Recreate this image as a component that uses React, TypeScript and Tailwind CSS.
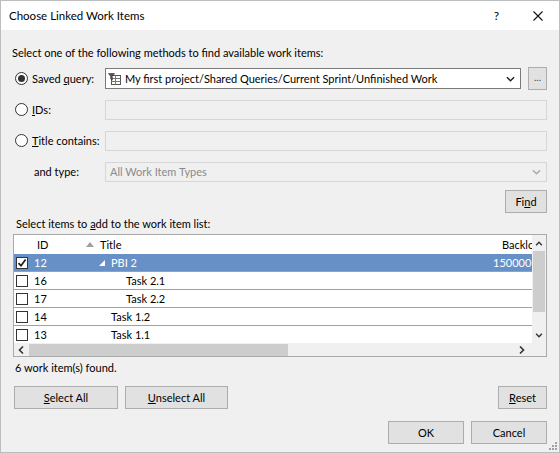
import React from 'react';

function Radio({ checked }: { checked?: boolean }) {
    return (
        <span className="flex h-[13px] w-[13px] shrink-0 items-center justify-center rounded-full border border-[#333333] bg-white">
            {checked && <span className="h-[7px] w-[7px] rounded-full bg-[#333333]" />}
        </span>
    );
}

function Check({ checked }: { checked?: boolean }) {
    return (
        <span className="flex h-[12px] w-[12px] shrink-0 items-center justify-center border border-[#333333] bg-white">
            {checked && (
                <svg viewBox="0 0 10 10" className="h-[10px] w-[10px]">
                    <path d="M1.5 5.2 L4 7.8 L8.6 1.6" stroke="#1a1a1a" strokeWidth="1.7" fill="none" />
                </svg>
            )}
        </span>
    );
}

function Btn({ children, className = '' }: { children: React.ReactNode; className?: string }) {
    return (
        <div className={`flex h-[23px] items-center justify-center border border-[#adadad] bg-[#e1e1e1] ${className}`}>
            {children}
        </div>
    );
}

function Chevron({ color = '#222222' }: { color?: string }) {
    return (
        <svg viewBox="0 0 10 6" className="h-[6px] w-[9px]">
            <path d="M1 1 L5 5 L9 1" stroke={color} strokeWidth="1.6" fill="none" />
        </svg>
    );
}

function QueryIcon() {
    return (
        <svg viewBox="0 0 13 12" className="h-[12px] w-[13px]">
            <rect x="3.5" y="2.5" width="9" height="9" fill="#fff" stroke="#555" />
            <path d="M3.5 5.5 H12.5 M3.5 8.5 H12.5 M7.5 2.5 V11.5" stroke="#777" />
            <path d="M0.5 0.5 H6.5 L4.3 3.5 V7 L2.7 6 V3.5 Z" fill="#555" stroke="#333" strokeWidth="0.6" />
        </svg>
    );
}

const rows = [
    { id: '12', title: 'PBI 2', indent: 'pl-[2px]', tree: true, backlog: '150000', checked: true },
    { id: '16', title: 'Task 2.1', indent: 'pl-[29px]' },
    { id: '17', title: 'Task 2.2', indent: 'pl-[29px]' },
    { id: '14', title: 'Task 1.2', indent: 'pl-[14px]' },
    { id: '13', title: 'Task 1.1', indent: 'pl-[14px]' },
];

export default function App() {
    return (
        <div className="relative h-[453px] w-[560px] overflow-hidden border border-[#bdbdbd] bg-[#f0f0f0] font-['Lato','Noto_Sans',sans-serif] text-[11px] leading-[16px] text-black">
            {/* Title bar */}
            <div className="flex h-[29px] items-center bg-white pl-[8px]">
                <span className="text-[11.5px]">Choose Linked Work Items</span>
                <span className="ml-auto mr-[34px] text-[12px]">?</span>
                <svg viewBox="0 0 10 10" className="mr-[16px] h-[10px] w-[10px]">
                    <path d="M0.5 0.5 L9.5 9.5 M9.5 0.5 L0.5 9.5" stroke="#111" strokeWidth="1.1" />
                </svg>
            </div>

            <div className="flex flex-col pl-[11px] pr-[12px]">
                <div className="mt-[15px]">Select one of the following methods to find available work items:</div>

                {/* Methods */}
                <div className="mt-[7px] flex flex-col gap-[10px]">
                    <div className="flex h-[21px] items-center">
                        <div className="flex w-[93px] shrink-0 items-center gap-[4px] pl-[3px]">
                            <Radio checked />
                            <span>
                                Saved <span className="underline">q</span>uery:
                            </span>
                        </div>
                        <div className="flex h-[21px] flex-1 items-center border border-[#7a7a7a] bg-white pl-[2px] pr-[5px]">
                            <QueryIcon />
                            <span className="ml-[4px] whitespace-nowrap">My first project/Shared Queries/Current Sprint/Unfinished Work</span>
                            <span className="ml-auto">
                                <Chevron />
                            </span>
                        </div>
                        <Btn className="ml-[7px] h-[23px] w-[19px] pb-[3px] text-[10px] text-[#444]">...</Btn>
                    </div>
                    <div className="flex h-[21px] items-center">
                        <div className="flex w-[93px] shrink-0 items-center gap-[4px] pl-[3px]">
                            <Radio />
                            <span>
                                <span className="underline">I</span>Ds:
                            </span>
                        </div>
                        <div className="h-[20px] flex-1 border border-[#d6d6d6] bg-[#f0f0f0]" />
                    </div>
                    <div className="flex h-[21px] items-center">
                        <div className="flex w-[93px] shrink-0 items-center gap-[4px] whitespace-nowrap pl-[3px]">
                            <Radio />
                            <span>
                                <span className="underline">T</span>itle contains:
                            </span>
                        </div>
                        <div className="h-[20px] flex-1 border border-[#d6d6d6] bg-[#f0f0f0]" />
                    </div>
                    <div className="flex h-[21px] items-center">
                        <div className="w-[93px] shrink-0 pl-[22px]">and type:</div>
                        <div className="flex h-[20px] flex-1 items-center border border-[#d6d6d6] bg-[#f0f0f0] pl-[4px] pr-[5px] text-[#8a8a8a]">
                            <span>All Work Item Types</span>
                            <span className="ml-auto">
                                <Chevron color="#a8a8a8" />
                            </span>
                        </div>
                    </div>
                </div>

                <div className="mt-[8px] flex justify-end">
                    <Btn className="h-[22px] w-[42px]">
                        <span>
                            Fi<span className="underline">n</span>d
                        </span>
                    </Btn>
                </div>

                <div className="mt-[3px] pl-[4px]">
                    Select items to <span className="underline">a</span>dd to the work item list:
                </div>

                {/* Grid */}
                <div className="ml-[1px] mt-[2px] flex h-[123px] border border-[#a9a9a9] bg-white">
                    <div className="flex min-w-0 flex-1 flex-col overflow-hidden">
                        <div className="flex h-[19px] shrink-0 items-center whitespace-nowrap">
                            <span className="w-[23px] shrink-0" />
                            <span className="w-[49px] shrink-0">ID</span>
                            <svg viewBox="0 0 8 5" className="h-[5px] w-[8px] shrink-0">
                                <path d="M0 5 L4 0 L8 5 Z" fill="#a0a0a0" />
                            </svg>
                            <span className="ml-[6px] w-[402px] shrink-0">Title</span>
                            <span className="shrink-0">Backlog Priority</span>
                        </div>
                        <div className="h-[89px] shrink-0 overflow-hidden">
                            {rows.map((r) => (
                                <div
                                    key={r.id}
                                    className={`flex h-[18px] items-center whitespace-nowrap border-b border-[#a0a0a0] ${
                                        r.checked ? 'bg-[#6791c6] text-white' : ''
                                    }`}
                                >
                                    <span className="flex w-[20px] shrink-0 pl-[2px]">
                                        <Check checked={r.checked} />
                                    </span>
                                    <span className="w-[63px] shrink-0">{r.id}</span>
                                    <span className={`flex w-[396px] shrink-0 items-center ${r.indent}`}>
                                        {r.tree && (
                                            <svg viewBox="0 0 6 6" className="mr-[6px] h-[6px] w-[6px]">
                                                <path d="M6 0 L6 6 L0 6 Z" fill="#ffffff" />
                                            </svg>
                                        )}
                                        {r.title}
                                    </span>
                                    <span className="shrink-0">{r.backlog ?? ''}</span>
                                </div>
                            ))}
                        </div>
                        {/* horizontal scrollbar */}
                        <div className="flex h-[14px] shrink-0 items-center bg-[#f0f0f0] px-[4px]">
                            <svg viewBox="0 0 6 8" className="h-[8px] w-[6px]">
                                <path d="M5 0.5 L1.5 4 L5 7.5" stroke="#333" strokeWidth="1.6" fill="none" />
                            </svg>
                            <div className="ml-[5px] h-[12px] w-[259px] bg-[#cdcdcd]" />
                            <svg viewBox="0 0 6 8" className="ml-auto mr-[3px] h-[8px] w-[6px]">
                                <path d="M1 0.5 L4.5 4 L1 7.5" stroke="#333" strokeWidth="1.6" fill="none" />
                            </svg>
                        </div>
                    </div>
                    {/* vertical scrollbar */}
                    <div className="flex w-[14px] shrink-0 flex-col bg-[#f0f0f0]">
                        <div className="flex h-[16px] items-center justify-center">
                            <svg viewBox="0 0 8 6" className="h-[5px] w-[8px]">
                                <path d="M0.5 5 L4 1.5 L7.5 5" stroke="#333" strokeWidth="1.6" fill="none" />
                            </svg>
                        </div>
                        <div className="mx-[1px] h-[61px] bg-[#cdcdcd]" />
                        <div className="mt-[15px] flex h-[16px] items-center justify-center">
                            <svg viewBox="0 0 8 6" className="h-[5px] w-[8px]">
                                <path d="M0.5 1 L4 4.5 L7.5 1" stroke="#333" strokeWidth="1.6" fill="none" />
                            </svg>
                        </div>
                        <div className="flex-1" />
                    </div>
                </div>

                <div className="mt-[3px] pl-[3px]">6 work item(s) found.</div>

                <div className="mt-[10px] flex items-center">
                    <Btn className="ml-[2px] w-[104px]">
                        <span>
                            <span className="underline">S</span>elect All
                        </span>
                    </Btn>
                    <Btn className="ml-[7px] w-[103px]">
                        <span>
                            <span className="underline">U</span>nselect All
                        </span>
                    </Btn>
                    <Btn className="ml-auto w-[49px]">
                        <span>
                            <span className="underline">R</span>eset
                        </span>
                    </Btn>
                </div>

                <div className="mt-[12px] flex justify-end gap-[7px]">
                    <Btn className="w-[76px]">OK</Btn>
                    <Btn className="w-[76px]">Cancel</Btn>
                </div>
            </div>

            {/* resize grip */}
            <div className="absolute bottom-[2px] right-[2px] grid grid-cols-3 gap-[1px]">
                <span className="h-[2px] w-[2px]" />
                <span className="h-[2px] w-[2px]" />
                <span className="h-[2px] w-[2px] bg-[#a0a0a0]" />
                <span className="h-[2px] w-[2px]" />
                <span className="h-[2px] w-[2px] bg-[#a0a0a0]" />
                <span className="h-[2px] w-[2px] bg-[#a0a0a0]" />
                <span className="h-[2px] w-[2px] bg-[#a0a0a0]" />
                <span className="h-[2px] w-[2px] bg-[#a0a0a0]" />
                <span className="h-[2px] w-[2px] bg-[#a0a0a0]" />
            </div>
        </div>
    );
}
